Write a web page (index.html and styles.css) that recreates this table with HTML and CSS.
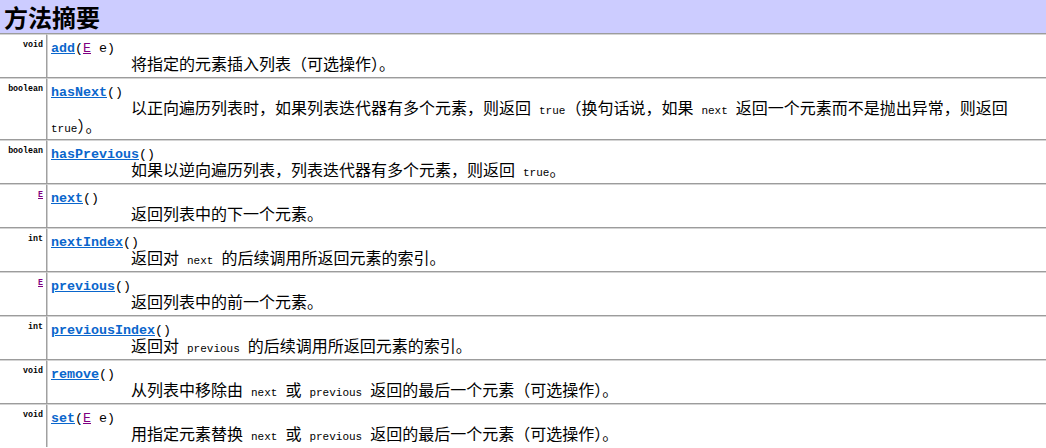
FILE: index.html
```html
<!DOCTYPE html>
<html lang="zh-CN">
<head>
<meta charset="utf-8">
<title>方法摘要</title>
<link rel="stylesheet" href="styles.css">
</head>
<body>
<div class="summary">
  <div class="title">方法摘要</div>

  <div class="row">
    <div class="type"><code>void</code></div>
    <div class="desc">
      <div class="sig"><a class="m" href="#">add</a>(<a class="t" href="#">E</a>&nbsp;e)</div>
      <div class="text">将指定的元素插入列表（可选操作）。</div>
    </div>
  </div>

  <div class="row">
    <div class="type"><code>boolean</code></div>
    <div class="desc">
      <div class="sig"><a class="m" href="#">hasNext</a>()</div>
      <div class="text">以正向遍历列表时，如果列表迭代器有多个元素，则返回 <code>true</code>（换句话说，如果 <code>next</code> 返回一个元素而不是抛出异常，则返回 <code>true</code>）。</div>
    </div>
  </div>

  <div class="row">
    <div class="type"><code>boolean</code></div>
    <div class="desc">
      <div class="sig"><a class="m" href="#">hasPrevious</a>()</div>
      <div class="text">如果以逆向遍历列表，列表迭代器有多个元素，则返回 <code>true</code>。</div>
    </div>
  </div>

  <div class="row">
    <div class="type"><a class="t" href="#">E</a></div>
    <div class="desc">
      <div class="sig"><a class="m" href="#">next</a>()</div>
      <div class="text">返回列表中的下一个元素。</div>
    </div>
  </div>

  <div class="row">
    <div class="type"><code>int</code></div>
    <div class="desc">
      <div class="sig"><a class="m" href="#">nextIndex</a>()</div>
      <div class="text">返回对 <code>next</code> 的后续调用所返回元素的索引。</div>
    </div>
  </div>

  <div class="row">
    <div class="type"><a class="t" href="#">E</a></div>
    <div class="desc">
      <div class="sig"><a class="m" href="#">previous</a>()</div>
      <div class="text">返回列表中的前一个元素。</div>
    </div>
  </div>

  <div class="row">
    <div class="type"><code>int</code></div>
    <div class="desc">
      <div class="sig"><a class="m" href="#">previousIndex</a>()</div>
      <div class="text">返回对 <code>previous</code> 的后续调用所返回元素的索引。</div>
    </div>
  </div>

  <div class="row">
    <div class="type"><code>void</code></div>
    <div class="desc">
      <div class="sig"><a class="m" href="#">remove</a>()</div>
      <div class="text">从列表中移除由 <code>next</code> 或 <code>previous</code> 返回的最后一个元素（可选操作）。</div>
    </div>
  </div>

  <div class="row">
    <div class="type"><code>void</code></div>
    <div class="desc">
      <div class="sig"><a class="m" href="#">set</a>(<a class="t" href="#">E</a>&nbsp;e)</div>
      <div class="text">用指定元素替换 <code>next</code> 或 <code>previous</code> 返回的最后一个元素（可选操作）。</div>
    </div>
  </div>
</div>
</body>
</html>
```

FILE: styles.css
```css
html, body {
  margin: 0;
  padding: 0;
  background: #ffffff;
}

body {
  width: 1046px;
  overflow: hidden;
  color: #000000;
}

.summary {
  width: 1046px;
}

.title {
  height: 33px;
  padding-left: 4px;
  background: #ccccff;
  font-family: "Noto Sans CJK SC", sans-serif;
  font-size: 24px;
  font-weight: bold;
  line-height: 33px;
}

.row {
  display: grid;
  grid-template-columns: 47px 1fr;
  border-top: 1px solid #9c9c9c;
}

.row > .type,
.row > .desc {
  border-top: 1px solid #d4d4d4;
}

.type {
  border-right: 1px solid #a0a0a0;
  text-align: right;
  font-family: "Liberation Mono", monospace;
  font-size: 8.3px;
  font-weight: bold;
  line-height: 11px;
  padding: 4px 3px 3px;
}

.type code {
  font-family: inherit;
  font-size: inherit;
}

.desc {
  border-left: 1px solid #d0d0d0;
  padding: 3px 3px 3px;
  font-size: 16px;
}

.sig {
  padding-top: 3px;
  font-family: "Liberation Mono", monospace;
  font-size: 13.33px;
  line-height: 16px;
}

.m {
  font-weight: bold;
  color: #0a66cc;
  text-decoration: underline;
}

.t {
  color: #800080;
  text-decoration: underline;
}

.text {
  margin-top: -1px;
  font-family: "Liberation Sans", "Noto Sans CJK SC", sans-serif;
  line-height: 18px;
  text-indent: 80px;
  word-spacing: 3.55px;
}

.text code {
  font-family: "Liberation Mono", monospace;
  font-size: 11px;
  line-height: 0;
}
```
